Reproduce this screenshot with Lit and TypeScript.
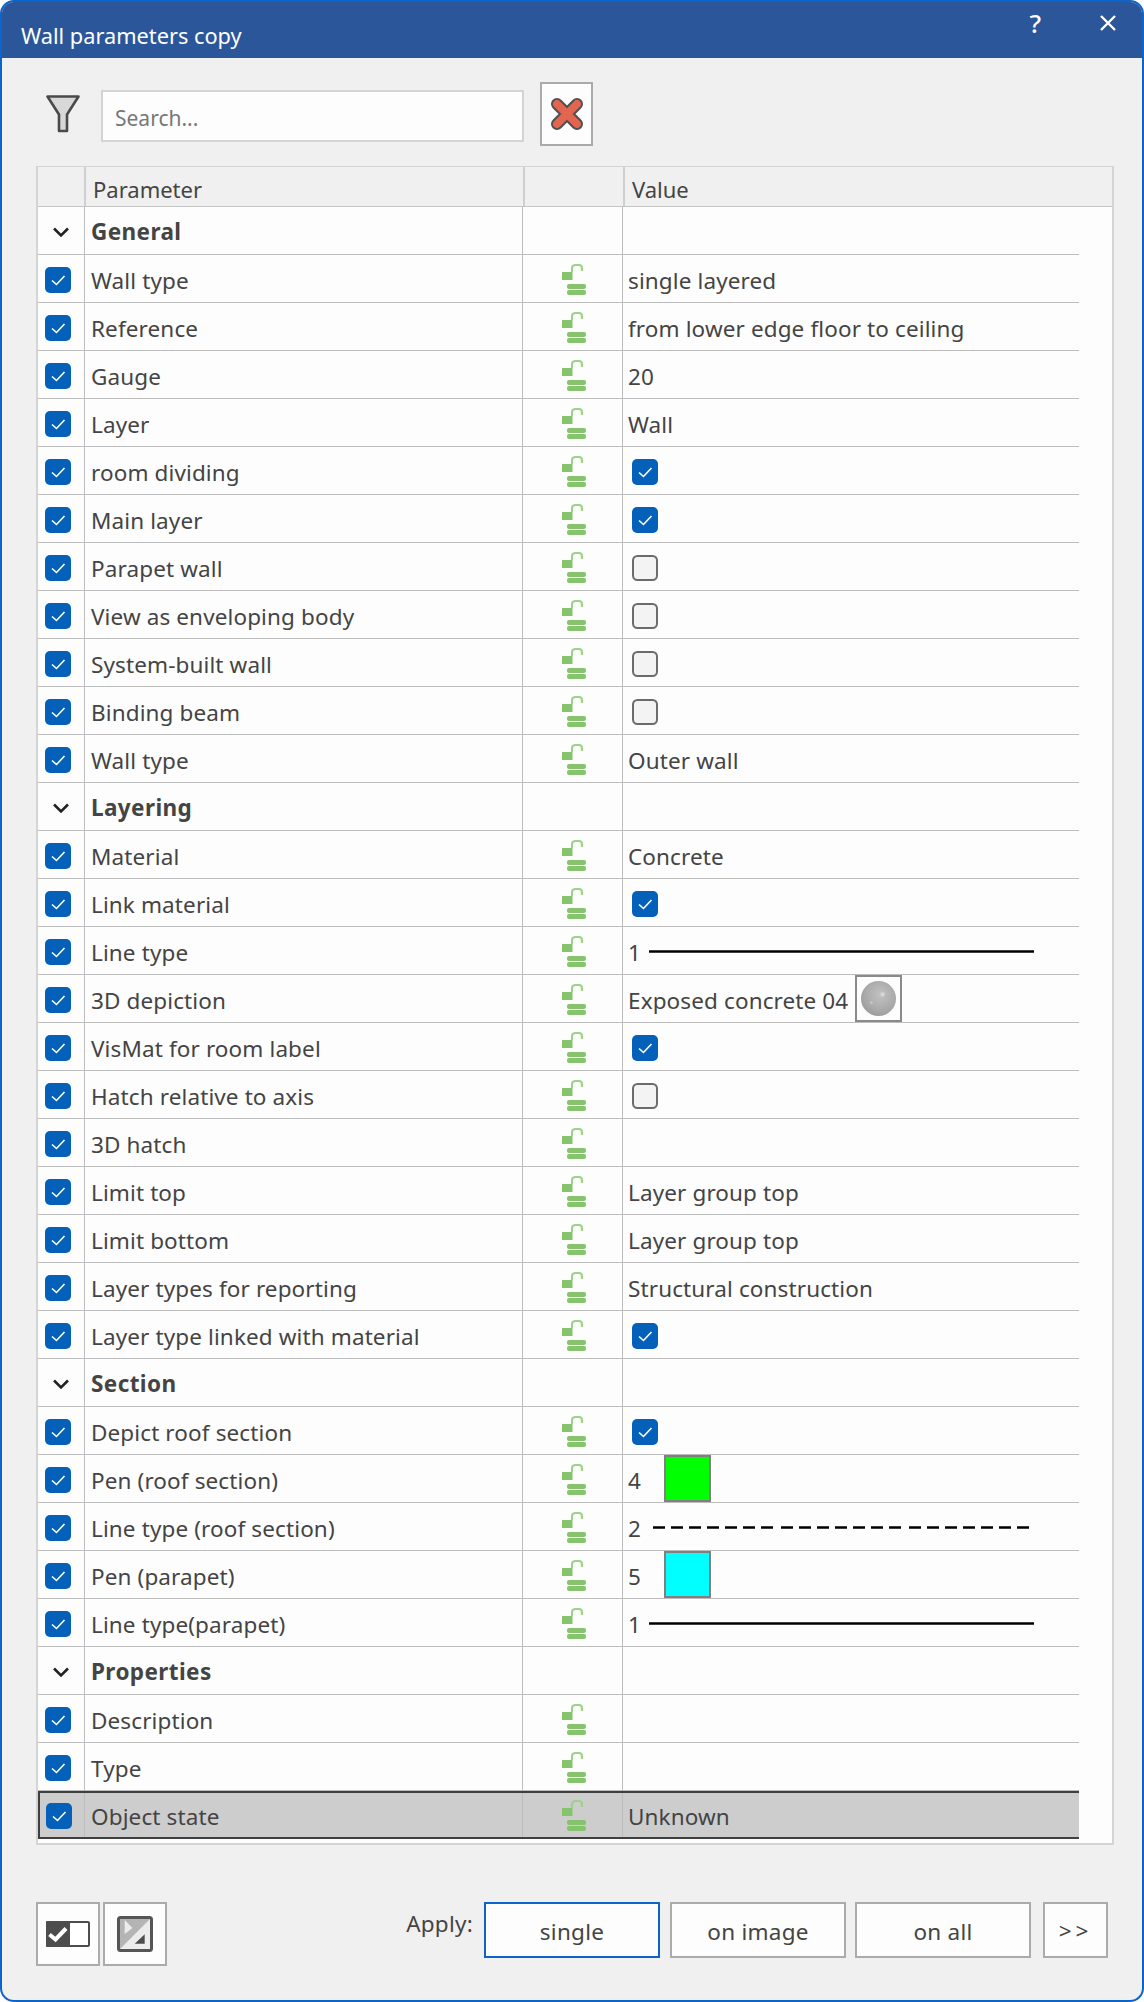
import { LitElement, html, css, svg } from 'lit';
import { customElement } from 'lit/decorators.js';

type Value =
  | { kind: 'text'; text: string }
  | { kind: 'check'; on: boolean }
  | { kind: 'line'; num: string; dashed?: boolean }
  | { kind: 'pen'; num: string; color: string }
  | { kind: 'material'; text: string }
  | { kind: 'none' };

type Row = { label: string; value?: Value; group?: boolean; selected?: boolean };

const text = (t: string): Value => ({ kind: 'text', text: t });
const check = (on: boolean): Value => ({ kind: 'check', on });

const ROWS: Row[] = [
  { label: 'General', group: true },
  { label: 'Wall type', value: text('single layered') },
  { label: 'Reference', value: text('from lower edge floor to ceiling') },
  { label: 'Gauge', value: text('20') },
  { label: 'Layer', value: text('Wall') },
  { label: 'room dividing', value: check(true) },
  { label: 'Main layer', value: check(true) },
  { label: 'Parapet wall', value: check(false) },
  { label: 'View as enveloping body', value: check(false) },
  { label: 'System-built wall', value: check(false) },
  { label: 'Binding beam', value: check(false) },
  { label: 'Wall type', value: text('Outer wall') },
  { label: 'Layering', group: true },
  { label: 'Material', value: text('Concrete') },
  { label: 'Link material', value: check(true) },
  { label: 'Line type', value: { kind: 'line', num: '1' } },
  { label: '3D depiction', value: { kind: 'material', text: 'Exposed concrete 04' } },
  { label: 'VisMat for room label', value: check(true) },
  { label: 'Hatch relative to axis', value: check(false) },
  { label: '3D hatch' },
  { label: 'Limit top', value: text('Layer group top') },
  { label: 'Limit bottom', value: text('Layer group top') },
  { label: 'Layer types for reporting', value: text('Structural construction') },
  { label: 'Layer type linked with material', value: check(true) },
  { label: 'Section', group: true },
  { label: 'Depict roof section', value: check(true) },
  { label: 'Pen (roof section)', value: { kind: 'pen', num: '4', color: '#00ff00' } },
  { label: 'Line type (roof section)', value: { kind: 'line', num: '2', dashed: true } },
  { label: 'Pen (parapet)', value: { kind: 'pen', num: '5', color: '#00ffff' } },
  { label: 'Line type(parapet)', value: { kind: 'line', num: '1' } },
  { label: 'Properties', group: true },
  { label: 'Description' },
  { label: 'Type' },
  { label: 'Object state', value: text('Unknown'), selected: true },
];

const checkMark = svg`<path d="M7 13.5l4.5 4L19.5 9" fill="none" stroke="#fff" stroke-width="1.6"/>`;

const lockIcon = html`<svg class="lock" width="26" height="32" viewBox="0 0 26 32">
  <rect x="1" y="9" width="10.5" height="8" fill="#85c46c"/>
  <path d="M11 9V5.5Q11 2 14.5 2H18Q21 2 21 5.5V8" fill="none" stroke="#9ed28a" stroke-width="2.2"/>
  <rect x="6" y="21" width="19" height="5" rx="2" fill="#85c46c"/>
  <rect x="6" y="27" width="19" height="5" rx="2" fill="#85c46c"/>
</svg>`;

@customElement('app-root')
export class AppRoot extends LitElement {
  static styles = css`
    :host {
      display: block;
      width: 1144px;
      height: 2002px;
      background: #fff;
      font-family: 'Noto Sans', 'Open Sans', sans-serif;
      font-size: 22.5px;
      letter-spacing: 0.12px;
      color: #444;
    }
    * { box-sizing: border-box; }

    .window {
      display: flex;
      flex-direction: column;
      height: 100%;
      background: #f0f0f0;
      border: 2px solid #0a64c9;
      border-radius: 14px;
      overflow: hidden;
    }

    .titlebar {
      display: flex;
      align-items: flex-start;
      height: 56px;
      flex: none;
      background: #2b579a;
      color: #fff;
      padding-left: 19px;
      letter-spacing: 0;
    }
    .title { margin-top: 19px; line-height: 30px; font-size: 21.75px; }
    .help {
      margin-left: auto;
      margin-top: 5px;
      font-size: 26px;
      line-height: 32px;
      font-weight: 500;
    }
    .close { margin: 13px 26px 0 59px; }

    .toolbar {
      display: flex;
      align-items: center;
      height: 64px;
      margin: 24px 0 20px 44px;
      flex: none;
    }
    .search {
      width: 423px;
      height: 52px;
      margin: 4px 16px 0 21px;
      padding: 3px 12px 0;
      border: 2px solid #d4d4d4;
      background: #fdfdfd;
      font: inherit;
      font-size: 21px;
      letter-spacing: 0;
      outline: none;
    }
    .search::placeholder { color: #777; opacity: 1; }
    .clear {
      display: flex;
      align-items: center;
      justify-content: center;
      width: 53px;
      height: 64px;
      padding: 0;
      background: #fdfdfd;
      border: 2px solid #aaa;
    }

    .table {
      flex: none;
      width: 1078px;
      height: 1679px;
      margin-left: 34px;
      background: #fdfdfd;
      border: 2px solid #d4d4d4;
      border-top-width: 1px;
    }

    .head {
      display: grid;
      grid-template-columns: 46px 439px 100px 1fr;
      height: 40px;
      background: #f0f0f0;
      border-bottom: 1px solid #c4c4c4;
      font-size: 22px;
      letter-spacing: 0;
    }
    .head div {
      display: flex;
      align-items: center;
      padding: 5px 0 0 7px;
      border-left: 2px solid #cfcfcf;
    }
    .head div:first-child { border-left: none; }

    .row {
      display: grid;
      grid-template-columns: 46px 438px 100px 1fr;
      width: 1041px;
      height: 48px;
      border-bottom: 1px solid #bdbdbd;
    }
    .cell {
      display: flex;
      align-items: center;
      min-width: 0;
      white-space: nowrap;
      border-left: 1px solid #bdbdbd;
    }
    .cell:first-child { border-left: none; }
    .c-box { justify-content: center; padding-right: 6px; }
    .c-label { padding-left: 6px; padding-top: 3px; }
    .c-lock { justify-content: center; padding-left: 2px; }
    .c-value { padding-left: 5px; padding-top: 3px; }

    .group .c-box { padding: 2px 0 0; }
    .group .c-label { font-weight: 700; padding-top: 2px; letter-spacing: 0.4px; }

    .selected {
      grid-template-columns: 44px 438px 100px 1fr;
      background: #cdcdcd;
      border: 2px solid #3f3f3f;
      border-right: none;
    }

    .box {
      display: block;
      width: 26px;
      height: 26px;
      margin-top: 2px;
    }
    .c-value .box { margin: -1px 0 0 4px; }

    .num { flex: none; width: 14px; }
    .line { margin: -2px 0 0 7px; }
    .line.dashed { margin-left: 11px; }
    .swatch {
      width: 47px;
      height: 47px;
      margin: -3px 0 0 22px;
      border: 2px solid #808080;
    }
    .mat {
      display: flex;
      align-items: center;
      justify-content: center;
      width: 47px;
      height: 47px;
      margin: -3px 0 0 7px;
      border: 2px solid #8a8a8a;
    }
    .sphere {
      width: 35px;
      height: 35px;
      border-radius: 50%;
      background:
        radial-gradient(circle at 62% 38%, #e4e4e4 0, transparent 3px),
        radial-gradient(circle at 30% 62%, #d0d0d0 0, transparent 2px),
        radial-gradient(circle at 55% 40%, #c2c2c2 0, #a9a9a9 55%, #8c8c8c 100%);
    }

    .footer {
      display: flex;
      align-items: flex-start;
      margin: 57px 0 0 34px;
    }
    .btn {
      padding: 0;
      background: #fdfdfd;
      border: 2px solid #ababab;
      color: inherit;
      font: inherit;
      letter-spacing: 0.25px;
    }
    .tool {
      display: flex;
      align-items: center;
      justify-content: center;
      width: 64px;
      height: 64px;
      margin-right: 3px;
    }
    .apply { margin: 4px 11px 0 auto; line-height: 36px; letter-spacing: 0.25px; }
    .action { width: 176px; height: 56px; margin-right: 10px; padding-top: 2px; }
    .action.current { border-color: #0a64c9; }
    .action.middle { margin-right: 9px; }
    .more { width: 65px; height: 56px; margin: 0 34px 0 2px; letter-spacing: 4px; }
  `;

  private renderBox(on: boolean) {
    return html`<svg class="box" viewBox="0 0 26 26">
      ${on
        ? svg`<rect width="26" height="26" rx="5" fill="#0560b9"/>${checkMark}`
        : svg`<rect x="1" y="1" width="24" height="24" rx="4.5" fill="#f3f3f3" stroke="#6b6b6b" stroke-width="2"/>`}
    </svg>`;
  }

  private renderLine(dashed?: boolean) {
    return dashed
      ? html`<svg class="line dashed" width="377" height="3">
          <line x1="0" y1="1.5" x2="377" y2="1.5" stroke="#000" stroke-width="2.5"
            stroke-dasharray="12 6 12 6 12 6 12 6 12 6 12 6 12 8"/>
        </svg>`
      : html`<svg class="line" width="385" height="3">
          <line x1="0" y1="1.5" x2="385" y2="1.5" stroke="#000" stroke-width="2.5"/>
        </svg>`;
  }

  private renderValue(v?: Value) {
    if (!v) return '';
    switch (v.kind) {
      case 'text':
        return v.text;
      case 'check':
        return this.renderBox(v.on);
      case 'line':
        return html`<span class="num">${v.num}</span>${this.renderLine(v.dashed)}`;
      case 'pen':
        return html`<span class="num">${v.num}</span>
          <span class="swatch" style="background:${v.color}"></span>`;
      case 'material':
        return html`${v.text}<span class="mat"><span class="sphere"></span></span>`;
    }
    return '';
  }

  private renderRow(r: Row) {
    if (r.group) {
      return html`<div class="row group">
        <div class="cell c-box">
          <svg width="18" height="12" viewBox="0 0 18 12">
            <path d="M2 2.5L9 9.5l7-7" fill="none" stroke="#222" stroke-width="2.6"/>
          </svg>
        </div>
        <div class="cell c-label">${r.label}</div>
        <div class="cell"></div>
        <div class="cell"></div>
      </div>`;
    }
    return html`<div class="row ${r.selected ? 'selected' : ''}">
      <div class="cell c-box">${this.renderBox(true)}</div>
      <div class="cell c-label">${r.label}</div>
      <div class="cell c-lock">${lockIcon}</div>
      <div class="cell c-value">${this.renderValue(r.value)}</div>
    </div>`;
  }

  render() {
    return html`<div class="window">
      <div class="titlebar">
        <span class="title">Wall parameters copy</span>
        <span class="help">?</span>
        <svg class="close" width="16" height="16" viewBox="0 0 16 16">
          <path d="M1 1l14 14M15 1L1 15" stroke="#fff" stroke-width="2.4"/>
        </svg>
      </div>

      <div class="toolbar">
        <svg width="34" height="38" viewBox="0 0 34 38">
          <path d="M1.5 1.5H32.5L21 19.5V36H13V19.5Z" fill="#d8d8d8" stroke="#4a4a4a"
            stroke-width="2.6" stroke-linejoin="round"/>
        </svg>
        <input class="search" placeholder="Search..." />
        <button class="clear">
          <svg width="34" height="34" viewBox="0 0 34 34">
            <path d="M7 7L27 27M27 7L7 27" stroke="#4f4f4f" stroke-width="12" stroke-linecap="round"/>
            <path d="M7 7L27 27M27 7L7 27" stroke="#e2654f" stroke-width="8" stroke-linecap="round"/>
          </svg>
        </button>
      </div>

      <div class="table">
        <div class="head">
          <div></div>
          <div>Parameter</div>
          <div></div>
          <div>Value</div>
        </div>
        ${ROWS.map((r) => this.renderRow(r))}
      </div>

      <div class="footer">
        <button class="btn tool">
          <svg width="44" height="26" viewBox="0 0 44 26">
            <rect x="1" y="1" width="42" height="24" rx="1" fill="#fff" stroke="#4d4d4d" stroke-width="2"/>
            <path d="M1 0H24V26H1Q0 26 0 25V1Q0 0 1 0Z" fill="#4d4d4d"/>
            <path d="M3.5 13.5L9.5 18.5L20 7.5" fill="none" stroke="#fff" stroke-width="4"/>
          </svg>
        </button>
        <button class="btn tool">
          <svg width="36" height="36" viewBox="0 0 36 36">
            <rect x="1.5" y="1.5" width="33" height="33" rx="2" fill="#ececec" stroke="#555" stroke-width="3"/>
            <path d="M3 3H33L3 33Z" fill="#b4b4b4"/>
            <path d="M7.7 4L15.5 12L7.7 18Z" fill="#ececec"/>
            <path d="M27.7 18.3V27.7H17.7Z" fill="#4d4d4d"/>
          </svg>
        </button>
        <span class="apply">Apply:</span>
        <button class="btn action current">single</button>
        <button class="btn action middle">on image</button>
        <button class="btn action">on all</button>
        <button class="btn more">&gt;&gt;</button>
      </div>
    </div>`;
  }
}

declare global {
  interface HTMLElementTagNameMap {
    'app-root': AppRoot;
  }
}
